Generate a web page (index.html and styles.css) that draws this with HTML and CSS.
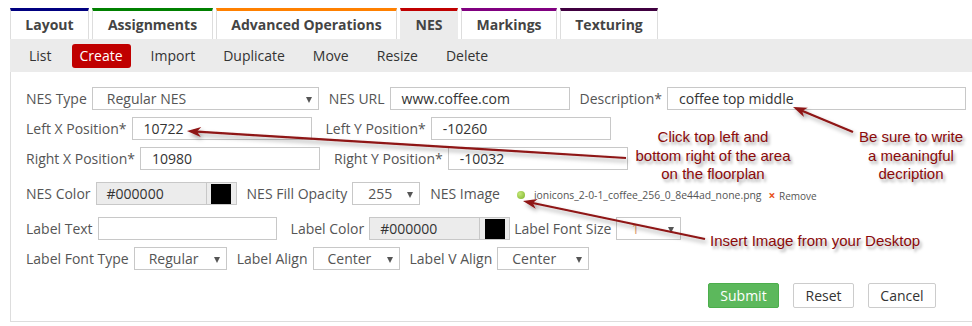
FILE: index.html
```html
<!DOCTYPE html>
<html lang="en">
<head>
    <meta charset="UTF-8">
    <link rel="stylesheet" href="styles.css">
</head>
<body>
<div class="page">
    <ul class="tabs">
        <li class="tab t-layout">Layout</li>
        <li class="tab t-assign">Assignments</li>
        <li class="tab t-adv">Advanced Operations</li>
        <li class="tab t-nes active">NES</li>
        <li class="tab t-mark">Markings</li>
        <li class="tab t-tex">Texturing</li>
    </ul>

    <div class="toolbar">
        <a>List</a>
        <a class="current">Create</a>
        <a>Import</a>
        <a>Duplicate</a>
        <a>Move</a>
        <a>Resize</a>
        <a>Delete</a>
    </div>

    <div class="panel">
        <div class="row">
            <label>NES Type</label>
            <div class="select w-type">Regular NES<span class="caret"></span></div>
            <label class="after">NES URL</label>
            <div class="input w-180">www.coffee.com</div>
            <label class="after">Description*</label>
            <div class="input w-desc">coffee top middle</div>
        </div>
        <div class="row">
            <label>Left X Position*</label>
            <div class="input w-180">10722</div>
            <label class="after wide">Left Y Position*</label>
            <div class="input w-180">-10260</div>
        </div>
        <div class="row loose">
            <label>Right X Position*</label>
            <div class="input w-180">10980</div>
            <label class="after wide">Right Y Position*</label>
            <div class="input w-180">-10032</div>
        </div>
        <div class="row loose">
            <label>NES Color</label>
            <div class="color">
                <span class="hex">#000000</span>
                <span class="swatch"><i></i></span>
            </div>
            <label class="after">NES Fill Opacity</label>
            <div class="select w-opacity">255<span class="caret"></span></div>
            <label class="after">NES Image</label>
            <span class="dot"></span>
            <span class="filename">ionicons_2-0-1_coffee_256_0_8e44ad_none.png</span>
            <span class="remove"><b>×</b> Remove</span>
        </div>
        <div class="row">
            <label>Label Text</label>
            <div class="input w-text"></div>
            <label class="after wide">Label Color</label>
            <div class="color">
                <span class="hex">#000000</span>
                <span class="swatch"><i></i></span>
            </div>
            <label class="after tight">Label Font Size</label>
            <div class="select w-size faded">1<span class="caret"></span></div>
        </div>
        <div class="row last">
            <label>Label Font Type</label>
            <div class="select w-font">Regular<span class="caret"></span></div>
            <label class="after">Label Align</label>
            <div class="select w-align">Center<span class="caret"></span></div>
            <label class="after">Label V Align</label>
            <div class="select w-valign">Center<span class="caret"></span></div>
        </div>
        <div class="actions">
            <button class="btn btn-submit">Submit</button>
            <button class="btn btn-reset">Reset</button>
            <button class="btn btn-cancel">Cancel</button>
        </div>
    </div>

    <!-- annotations drawn over the form -->
    <svg class="arrows" width="972" height="326" viewBox="0 0 972 326">
        <defs>
            <filter id="shadow" x="-10%" y="-50%" width="120%" height="200%">
                <feDropShadow dx="2" dy="3" stdDeviation="2" flood-color="#000" flood-opacity="0.35"/>
            </filter>
        </defs>
        <g filter="url(#shadow)" fill="#8e1414">
            <g stroke="#8e1414" stroke-width="2.2">
                <line x1="197" y1="131.6" x2="626" y2="158"/>
                <line x1="802" y1="110.8" x2="853" y2="132"/>
                <line x1="532.8" y1="203" x2="705" y2="239"/>
            </g>
            <polygon points="187,131 200.7,136.9 197,131.6 201.3,126.9"/>
            <polygon points="793,107 804,117 802.2,110.9 807.8,107.8"/>
            <polygon points="523,201 535.7,208.8 532.8,203 537.7,199"/>
        </g>
    </svg>

    <div class="note note-click">Click top left and<br>bottom right of the area<br>on the floorplan</div>
    <div class="note note-desc">Be sure to write<br>a meaningful<br>decription</div>
    <div class="note note-image">Insert Image from your Desktop</div>
</div>
</body>
</html>
```

FILE: styles.css
```css
body {
    margin: 0;
    font-family: "Open Sans", Arial, sans-serif;
    font-size: 14px;
    color: #555;
    background: #fff;
}
.page {
    position: relative;
    width: 972px;
    height: 326px;
    overflow: hidden;
    padding: 8px 0 0 10px;
    box-sizing: border-box;
}

/* tabs */
.tabs {
    display: flex;
    gap: 3px;
    list-style: none;
    margin: 0;
    padding: 0;
}
.tab {
    height: 31px;
    box-sizing: border-box;
    line-height: 28px;
    font-weight: bold;
    color: #444;
    text-align: center;
    white-space: nowrap;
    background: #fff;
    border-top: 3px solid #000;
    border-left: 1px solid #ddd;
    border-right: 1px solid #ddd;
}
.t-layout { border-top-color: #000080; width: 79px; }
.t-assign { border-top-color: #008000; width: 121px; }
.t-adv { border-top-color: #ff8000; width: 181px; }
.t-nes { border-top-color: #c00000; width: 58px; }
.t-mark { border-top-color: #800080; width: 96px; }
.t-tex { border-top-color: #400040; width: 98px; }
.tab.active {
    background: #ebebeb;
    border-left-color: #ebebeb;
    border-right-color: #ebebeb;
}

/* toolbar */
.toolbar {
    display: flex;
    align-items: center;
    gap: 12px;
    height: 33px;
    width: 980px;
    padding-left: 11px;
    box-sizing: border-box;
    background: #ebebeb;
}
.toolbar a {
    padding: 2px 8px 3px;
    color: #333;
    border-radius: 3px;
}
.toolbar a.current {
    background: #c00000;
    color: #fff;
}

/* form panel */
.panel {
    width: 975px;
    box-sizing: border-box;
    border: 1px solid #ddd;
    border-top: none;
    padding: 15px 18px 13px 15px;
}
.row {
    display: flex;
    align-items: center;
    height: 23px;
    margin-bottom: 7px;
}
.row.loose { margin-bottom: 12px; }
.row.last { margin-bottom: 13px; }
.row label {
    margin-right: 5px;
    white-space: nowrap;
}
.row label.after { margin-left: 10px; }
.row label.after.wide { margin-left: 14px; }
.row label.after.tight { margin-left: 4px; }

.input, .select {
    height: 23px;
    box-sizing: border-box;
    border: 1px solid #c8c8c8;
    padding: 0 11px;
    line-height: 21px;
    color: #333;
    background: #fff;
    white-space: nowrap;
}
.select {
    position: relative;
    padding-left: 14px;
    color: #555;
}
.caret {
    position: absolute;
    right: 6px;
    top: 9px;
    border-left: 3.5px solid transparent;
    border-right: 3.5px solid transparent;
    border-top: 6px solid #555;
}
.faded { color: #e0a070; }
.w-180 { width: 180px; }
.w-type { width: 227px; }
.w-desc { width: 299px; }
.w-text { width: 179px; }
.w-opacity { width: 68px; padding-left: 15px; }
.w-size { width: 65px; }
.w-font { width: 93px; }
.w-align { width: 87px; }
.w-valign { width: 92px; }

.color {
    display: flex;
    height: 23px;
    width: 141px;
    box-sizing: border-box;
    border: 1px solid #c8c8c8;
    background: #ececec;
}
.color .hex {
    width: 99px;
    padding-left: 10px;
    line-height: 21px;
    color: #333;
    border-right: 1px solid #c8c8c8;
}
.color .swatch {
    flex: 1;
    display: flex;
    align-items: center;
    justify-content: center;
}
.color .swatch i {
    width: 20px;
    height: 20px;
    background: #000;
}

.dot {
    width: 8px;
    height: 8px;
    margin: 2px 9px 0 12px;
    border-radius: 50%;
    background: radial-gradient(circle at 35% 35%, #c5e87a, #7cb32a);
}
.filename {
    font-size: 10.4px;
    color: #555;
    margin-top: 2px;
}
.remove {
    font-size: 10px;
    color: #555;
    margin-left: 7px;
    margin-top: 3px;
}
.remove b {
    color: #e8531c;
    font-size: 12px;
    margin-right: 1px;
}

.actions {
    display: flex;
    justify-content: flex-end;
    gap: 14px;
    padding-right: 30px;
}
.btn {
    height: 25px;
    padding: 0;
    font-family: "Open Sans", Arial, sans-serif;
    font-size: 14px;
    color: #333;
    background: #fff;
    border: 1px solid #ccc;
    border-radius: 2px;
}
.btn-submit {
    background: #5cb85c;
    border-color: #4cae4c;
    color: #fff;
    width: 71px;
}
.btn-reset { width: 61px; }
.btn-cancel { width: 68px; }

/* annotations */
.arrows {
    position: absolute;
    left: 0;
    top: 0;
    pointer-events: none;
}
.note {
    position: absolute;
    font-family: "Liberation Sans", Arial, sans-serif;
    font-size: 15px;
    line-height: 18.5px;
    color: #8b0a0a;
    text-align: center;
    text-shadow: 2px 3px 3px rgba(0, 0, 0, 0.35);
    white-space: nowrap;
}
.note-click { left: 613px; top: 128px; width: 200px; }
.note-desc { left: 851px; top: 128px; width: 120px; }
.note-image { left: 710px; top: 232px; }
```
